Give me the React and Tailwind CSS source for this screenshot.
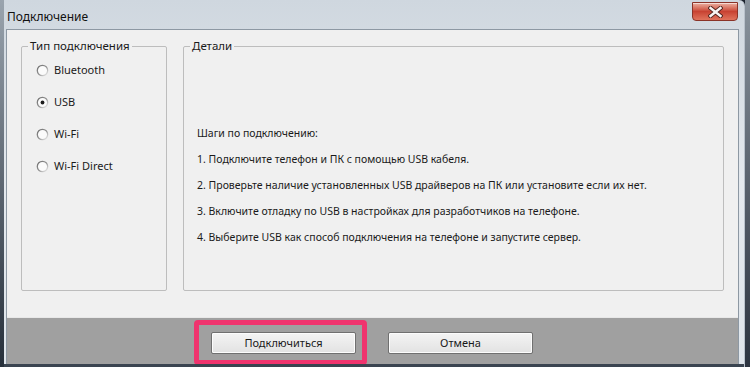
import React from 'react'

const font = { fontFamily: '"Noto Sans", "Liberation Sans", sans-serif' }

const options = ['Bluetooth', 'USB', 'Wi-Fi', 'Wi-Fi Direct']

const steps = [
  'Шаги по подключению:',
  '1. Подключите телефон и ПК с помощью USB кабеля.',
  '2. Проверьте наличие установленных USB драйверов на ПК или установите если их нет.',
  '3. Включите отладку по USB в настройках для разработчиков на телефоне.',
  '4. Выберите USB как способ подключения на телефоне и запустите сервер.'
]

const Radio = ({ checked }) => (
  <svg width="13" height="13" viewBox="0 0 13 13" className="shrink-0">
    <defs>
      <linearGradient id="rim" x1="0" y1="0" x2="1" y2="1">
        <stop offset="0" stopColor="#6b6b6b" />
        <stop offset="0.55" stopColor="#9a9a9a" />
        <stop offset="1" stopColor="#f4f4f4" />
      </linearGradient>
    </defs>
    <circle cx="6.5" cy="6.5" r="5.2" fill="#fbfbfb" stroke="url(#rim)" strokeWidth="1.3" />
    {checked && <circle cx="6.5" cy="6.5" r="1.9" fill="#1c1c1c" />}
  </svg>
)

const CloseButton = () => (
  <div className="w-[46px] h-[19px] rounded-b-[4px] border border-[#8a3328] bg-gradient-to-b from-[#eab0a2] via-[#c84232] to-[#e0735c] flex items-center justify-center shadow-[inset_0_1px_0_rgba(255,255,255,0.55)]">
    <svg width="15" height="12" viewBox="0 0 15 12">
      <path d="M2.5 2 L12.5 10 M12.5 2 L2.5 10" stroke="#4e221c" strokeWidth="4.2" strokeLinecap="square" />
      <path d="M2.5 2 L12.5 10 M12.5 2 L2.5 10" stroke="#f8f4f2" strokeWidth="2.4" strokeLinecap="square" />
    </svg>
  </div>
)

const Button = ({ children }) => (
  <button className="w-[145px] h-[22px] border border-[#707070] rounded-[2px] bg-gradient-to-b from-[#f4f4f4] to-[#e2e2e2] text-[11px] text-[#1a1a1a] shadow-[inset_0_0_0_1px_#fcfcfc]">
    {children}
  </button>
)

export default function App() {
  return (
    <div className="w-[750px] h-[367px] flex bg-[#1d2430] overflow-hidden" style={font}>
      <div className="w-[4px] bg-gradient-to-b from-[#9aa4ae] to-[#27303b]" />
      <div className="w-[741px] flex flex-col bg-gradient-to-b from-[#cfd7df] via-[#e4e9ee] to-[#dfe5eb] border-r border-[#b9c2cc] rounded-tr-[6px]">
        {/* title bar */}
        <div className="h-[30px] flex items-start justify-between pl-[3px] pr-[6px]">
          <span className="mt-[10px] text-[12px] leading-[14px] text-[#111]">Подключение</span>
          <div className="mt-[2px]">
            <CloseButton />
          </div>
        </div>

        {/* client */}
        <div className="ml-[2px] mr-[5px] flex-1 flex flex-col border border-[#8d98a3] border-b-0">
          <div className="h-[287px] bg-[#f0f0f0] flex gap-[16px] pl-[14px] pt-[9px]">
            <fieldset className="w-[146px] h-[252px] border border-[#bdbdbd] rounded-[2px]">
              <legend className="ml-[6px] px-[2px] text-[11.5px] leading-[14px] text-[#1a1a1a]">Тип подключения</legend>
              <div className="flex flex-col gap-[19px] pl-[14px] pt-[11px]">
                {options.map((o) => (
                  <label key={o} className="flex items-center gap-[5px] h-[13px] text-[11px] text-[#1a1a1a]">
                    <Radio checked={o === 'USB'} />
                    {o}
                  </label>
                ))}
              </div>
            </fieldset>
            <fieldset className="w-[541px] h-[252px] border border-[#bdbdbd] rounded-[2px]">
              <legend className="ml-[6px] px-[2px] text-[11.5px] leading-[14px] text-[#1a1a1a]">Детали</legend>
              <div className="flex flex-col gap-[12px] pl-[13px] pt-[73px] text-[10.5px] leading-[14px] text-[#1a1a1a]">
                {steps.map((s) => (
                  <p key={s}>{s}</p>
                ))}
              </div>
            </fieldset>
          </div>

          {/* bottom bar */}
          <div className="h-[47px] bg-[#a0a0a0] border-t border-[#e8e8e8] flex items-start pl-[187px] pt-[2px]">
            <div className="border-[5px] border-[#f0346e] rounded-[4px] pl-[12px] pr-[6px] pt-[4px] pb-[6px]">
              <Button>Подключиться</Button>
            </div>
            <div className="ml-[21px] mt-[9px]">
              <Button>Отмена</Button>
            </div>
          </div>
        </div>
        <div className="h-[3px] bg-[#3a4450]" />
      </div>
      <div className="w-[5px] bg-gradient-to-b from-[#8a949e] to-[#2c3440]" />
    </div>
  )
}
